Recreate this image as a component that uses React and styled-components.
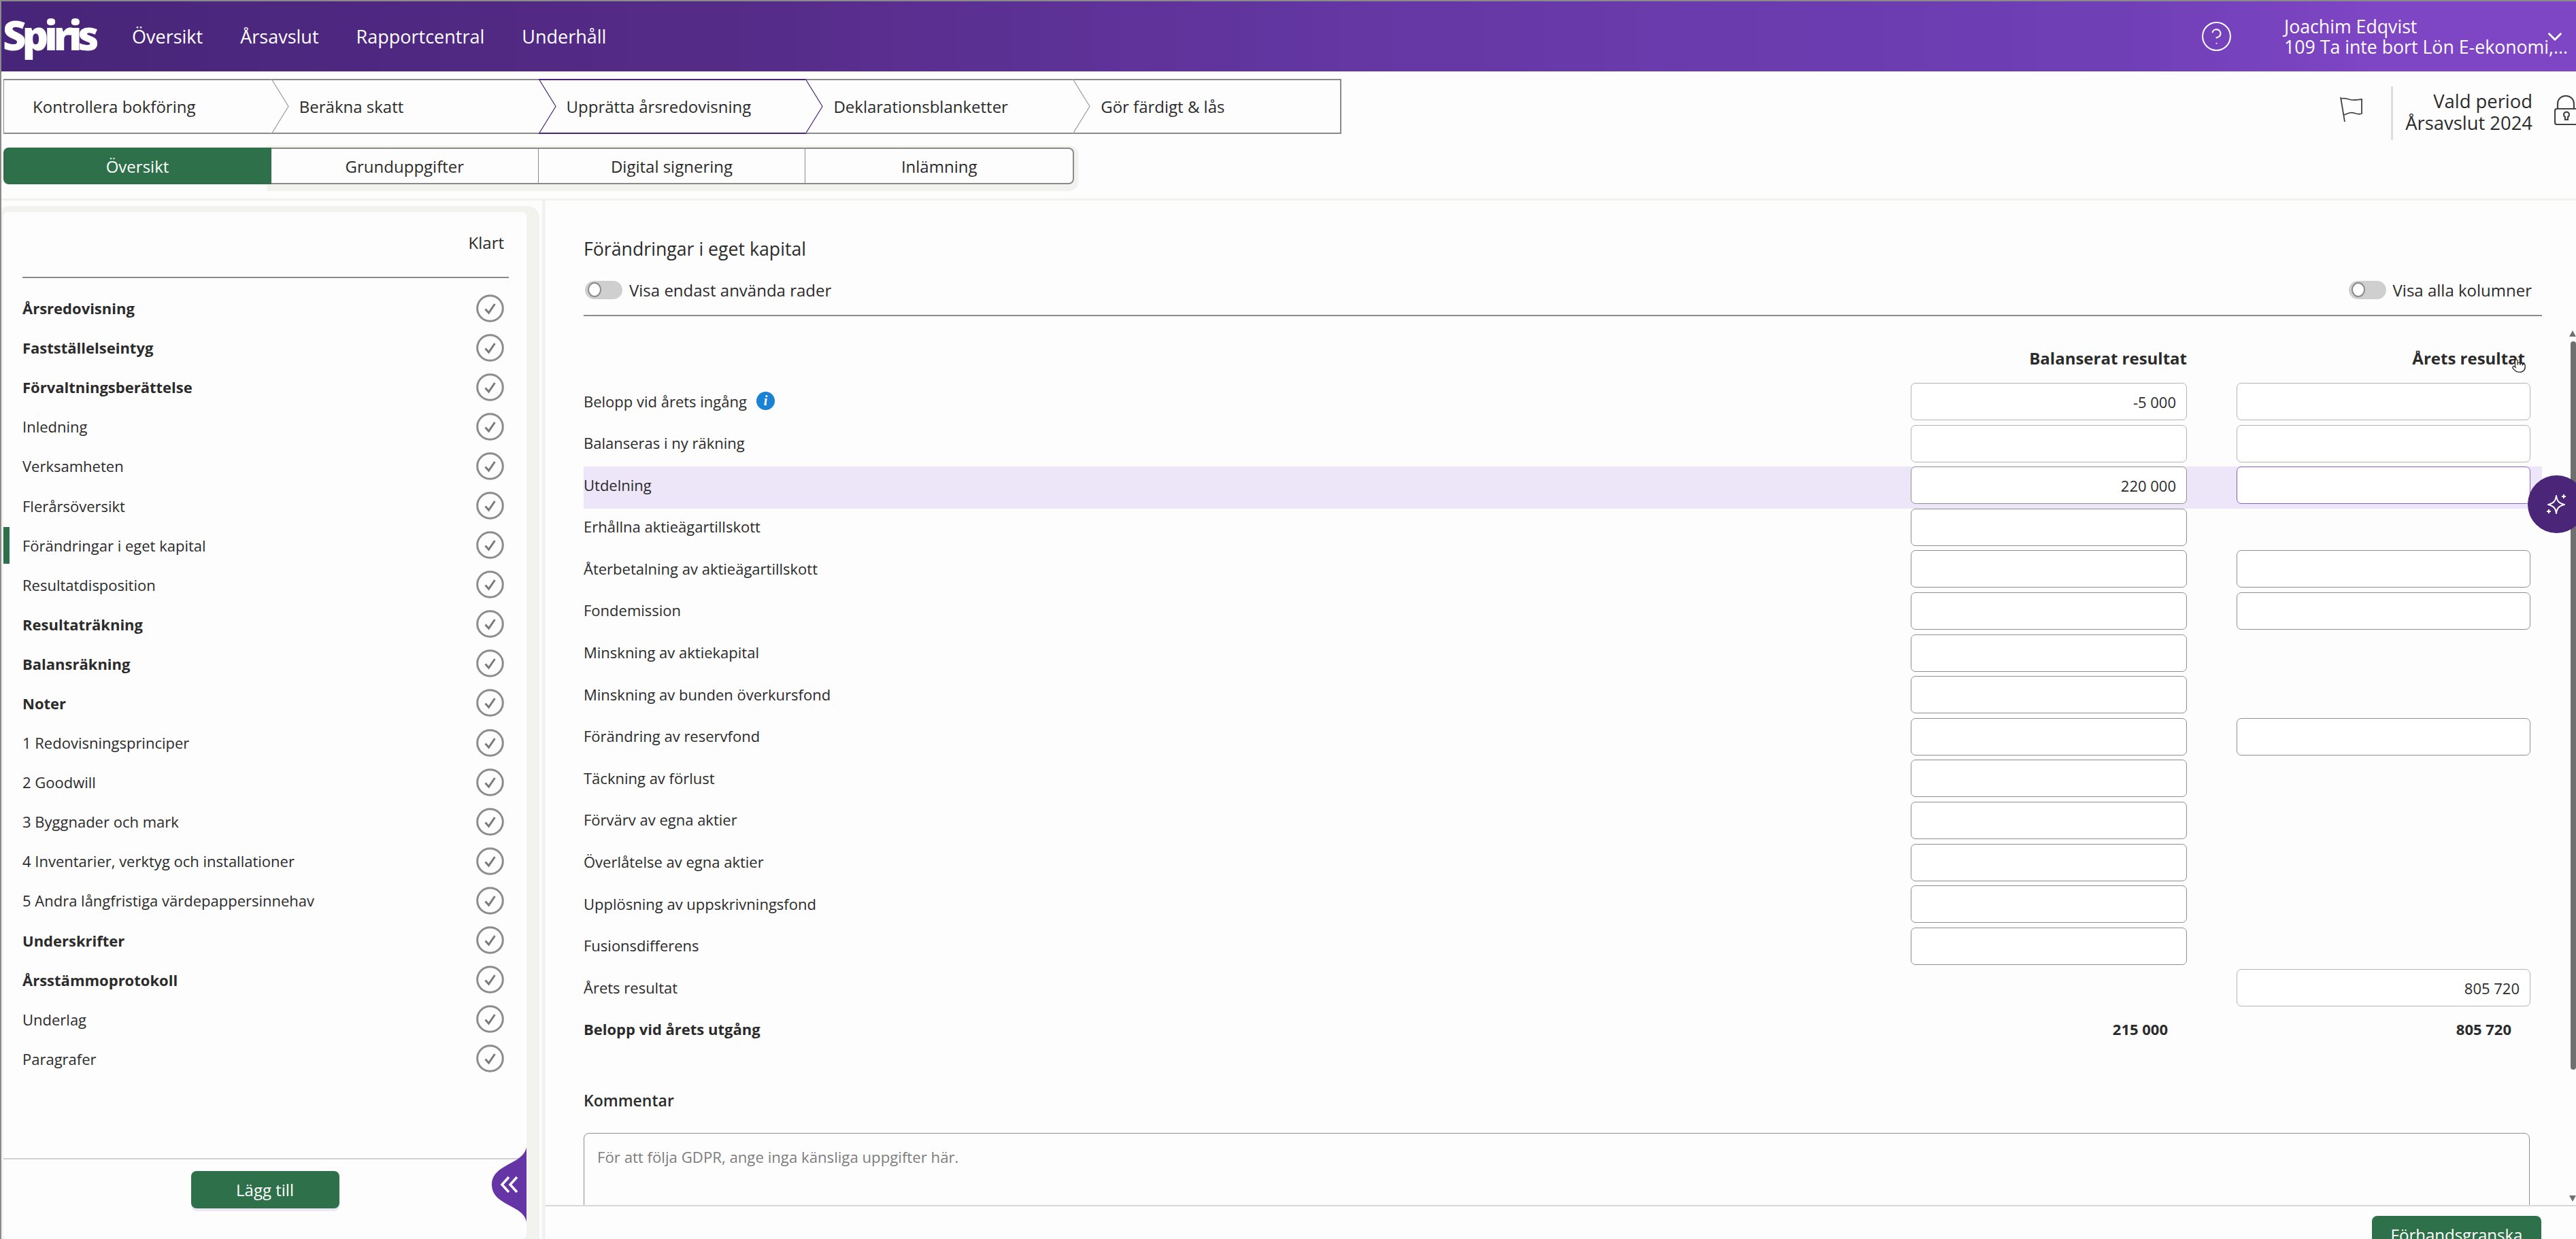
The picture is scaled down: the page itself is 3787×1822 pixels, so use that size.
import React from "react";
import styled, { createGlobalStyle } from "styled-components";
import { ChevronDown, CircleHelp, Pointer } from "lucide-react";

const steps = ["Kontrollera bokföring", "Beräkna skatt", "Upprätta årsredovisning", "Deklarationsblanketter", "Gör färdigt & lås"];
const tabs = ["Översikt", "Grunduppgifter", "Digital signering", "Inlämning"];
const navItems = ["Översikt", "Årsavslut", "Rapportcentral", "Underhåll"];

const sideRows = [
  { label: "Årsredovisning", bold: true },
  { label: "Fastställelseintyg", bold: true },
  { label: "Förvaltningsberättelse", bold: true },
  { label: "Inledning" },
  { label: "Verksamheten" },
  { label: "Flerårsöversikt" },
  { label: "Förändringar i eget kapital", active: true },
  { label: "Resultatdisposition" },
  { label: "Resultaträkning", bold: true },
  { label: "Balansräkning", bold: true },
  { label: "Noter", bold: true },
  { label: "1 Redovisningsprinciper" },
  { label: "2 Goodwill" },
  { label: "3 Byggnader och mark" },
  { label: "4 Inventarier, verktyg och installationer" },
  { label: "5 Andra långfristiga värdepappersinnehav" },
  { label: "Underskrifter", bold: true },
  { label: "Årsstämmoprotokoll", bold: true },
  { label: "Underlag" },
  { label: "Paragrafer" },
];

const equityRows = [
  { label: "Belopp vid årets ingång", info: true, a: "-5 000", b: "", tone: "soft" },
  { label: "Balanseras i ny räkning", a: "", b: "", tone: "soft" },
  { label: "Utdelning", a: "220 000", b: "", focus: true },
  { label: "Erhållna aktieägartillskott", a: "" },
  { label: "Återbetalning av aktieägartillskott", a: "", b: "" },
  { label: "Fondemission", a: "", b: "" },
  { label: "Minskning av aktiekapital", a: "" },
  { label: "Minskning av bunden överkursfond", a: "" },
  { label: "Förändring av reservfond", a: "", b: "" },
  { label: "Täckning av förlust", a: "" },
  { label: "Förvärv av egna aktier", a: "" },
  { label: "Överlåtelse av egna aktier", a: "" },
  { label: "Upplösning av uppskrivningsfond", a: "" },
  { label: "Fusionsdifferens", a: "" },
  { label: "Årets resultat", b: "805 720", tone: "soft" },
];

const GlobalStyle = createGlobalStyle`
  html, body { margin: 0; padding: 0; background: #fdfdfd; }
  * { box-sizing: border-box; }
`;

const Page = styled.div`
  width: 3787px;
  height: 1822px;
  overflow: hidden;
  display: flex;
  flex-direction: column;
  background: #fdfdfd;
  border-left: 2px solid #8a8a8a;
  font-family: "Open Sans", "Noto Sans", sans-serif;
  font-size: 22px;
  color: #2b2b2b;
`;

const TopBar = styled.header`
  height: 105px;
  flex: none;
  margin-left: -2px;
  display: flex;
  align-items: center;
  justify-content: space-between;
  padding: 0 14px 0 4px;
  border-top: 2px solid #8a8a8a;
  color: #fff;
  background: linear-gradient(90deg, #472578 0%, #552b88 28%, #6538a5 55%, #6f3fb6 82%, #7e45c4 92%, #7e45c4 100%);
`;

const TopLeft = styled.div`
  display: flex;
  align-items: center;
`;

const Logo = styled.div`
  width: 190px;
  font-family: "Open Sans", sans-serif;
  font-size: 60px;
  font-weight: 800;
  letter-spacing: -6px;
  line-height: 1;
  margin-top: -6px;
`;

const Nav = styled.nav`
  display: flex;
  gap: 55px;
  font-size: 27px;
`;

const TopRight = styled.div`
  display: flex;
  align-items: center;
`;

const HelpWrap = styled.div`
  display: flex;
  margin-right: 75px;
`;

const UserBlock = styled.div`
  width: 381px;
  font-size: 26.7px;
  line-height: 30px;
  white-space: nowrap;
`;

const SubHeader = styled.div`
  height: 190px;
  flex: none;
  display: flex;
  justify-content: space-between;
  padding: 11px 0 0 3px;
  border-bottom: 3px solid #f2f2ee;
`;

const Stepper = styled.div`
  width: 1967px;
  height: 81px;
  display: grid;
  grid-template-columns: repeat(5, 1fr);
  border-left: 1.5px solid #8a8a8a;
  border-right: 2px solid #8a8a8a;
`;

const Step = styled.div`
  position: relative;
  display: flex;
  align-items: center;
  padding-left: ${(p) => (p.$first ? "42px" : "41px")};
  border-top: 2px solid ${(p) => (p.$active ? "#4a2578" : "#8a8a8a")};
  border-bottom: 2px solid ${(p) => (p.$active ? "#4a2578" : "#8a8a8a")};
  font-size: 24px;
`;

const StepTip = styled.svg`
  position: absolute;
  right: -26px;
  top: -2px;
  z-index: 1;
`;

const TabRow = styled.div`
  display: flex;
  margin-top: 20px;
  height: 54px;
  width: 1574px;
`;

const ActiveTab = styled.div`
  position: relative;
  z-index: 1;
  width: 394px;
  display: flex;
  align-items: center;
  justify-content: center;
  color: #fff;
  background: #2e7049;
  border-radius: 8px 0 0 8px;
  font-size: 24px;
`;

const InactiveTabs = styled.div`
  flex: 1;
  display: grid;
  grid-template-columns: repeat(3, 1fr);
  background: #fdfdfd;
  border: 2px solid #8a8a8a;
  border-left: none;
  border-radius: 0 8px 8px 0;
  box-shadow: 0 3.5px 0 6.5px #f2f2ee;
`;

const Tab = styled.div`
  display: flex;
  align-items: center;
  justify-content: center;
  font-size: 24px;
  border-right: ${(p) => (p.$last ? "none" : "1.5px solid #8a8a8a")};
`;

const PeriodGroup = styled.div`
  display: flex;
  align-items: flex-start;
  margin-right: -10px;
`;

const FlagIcon = styled.svg`
  margin: 26px 41px 0 0;
`;

const PeriodText = styled.div`
  height: 79px;
  margin-top: 11px;
  padding: 6px 0 0 18px;
  border-left: 3px solid #dededa;
  text-align: right;
  font-size: 27.4px;
  line-height: 32px;
`;

const LockIcon = styled.svg`
  margin: 24px 0 0 32px;
`;

const Body = styled.div`
  flex: 1;
  min-height: 0;
  display: flex;
`;

const Sidebar = styled.aside`
  position: relative;
  z-index: 1;
  width: 769px;
  margin: 17px 0 0 3px;
  display: flex;
  flex-direction: column;
  background: #fdfdfd;
  box-shadow: 5px 5px 0 14px #f2f2ee;
  border-radius: 6px;
`;

const SideHead = styled.div`
  height: 97px;
  flex: none;
  margin: 0 26px 0 28px;
  padding: 27px 7px 0 0;
  text-align: right;
  font-size: 24px;
  line-height: 36px;
  border-bottom: 2px solid #8a8a8a;
`;

const SideList = styled.div`
  flex: 1;
  padding-top: 15px;
`;

const SideRow = styled.div`
  height: 58.1px;
  display: flex;
  align-items: center;
  justify-content: space-between;
  padding: 0 33px 0 28px;
  position: relative;
  font-weight: ${(p) => (p.$bold ? 700 : 400)};
`;

const ActiveMark = styled.span`
  position: absolute;
  left: 0;
  top: 2px;
  bottom: 2px;
  width: 9px;
  background: #2e7049;
`;

const SideFoot = styled.div`
  height: 119px;
  flex: none;
  display: flex;
  justify-content: center;
  padding-top: 17px;
  border-top: 2px solid #d2d2d2;
`;

const GreenButton = styled.button`
  height: 55px;
  width: ${(p) => p.$width}px;
  border: none;
  border-radius: 8px;
  background: #2e7049;
  color: #fff;
  font-family: inherit;
  font-size: 24px;
  box-shadow: 0 4px 0 #ece6f6;
`;

const CollapseHandle = styled.div`
  position: absolute;
  right: 0;
  top: 1375px;
  width: 51px;
  height: 110px;
`;

const Main = styled.main`
  position: relative;
  flex: 1;
  min-width: 0;
  margin-left: 28px;
  display: flex;
  flex-direction: column;
  background: #fdfdfd;
  box-shadow: -5px 0 0 #f2f2ee;
`;

const ScrollArea = styled.div`
  flex: 1;
  min-height: 0;
  overflow: hidden;
  display: flex;
`;

const Content = styled.div`
  flex: 1;
  min-width: 0;
  padding: 53px 40px 0 56px;
`;

const Title = styled.h2`
  margin: 0;
  font-size: 26.7px;
  font-weight: 400;
  line-height: 36px;
`;

const ToggleBar = styled.div`
  margin-top: 28px;
  padding: 0 15px 23px 2px;
  display: flex;
  justify-content: space-between;
  border-bottom: 2px solid #8a8a8a;
`;

const ToggleLabel = styled.label`
  display: flex;
  align-items: center;
  gap: 10px;
  height: 28px;
  font-size: 24px;
`;

const ToggleTrack = styled.span`
  width: 55px;
  height: 27px;
  display: flex;
  align-items: center;
  padding-left: 4px;
  border-radius: 14px;
  background: #cfcfcf;
`;

const ToggleKnob = styled.span`
  width: 20px;
  height: 22px;
  border-radius: 50%;
  background: #fff;
  border: 2px solid #8a8a8a;
`;

const TableRow = styled.div`
  display: grid;
  grid-template-columns: 1fr 406px 432px;
  column-gap: 73px;
  padding-right: 17px;
  height: 61.6px;
  background: ${(p) => (p.$focus ? "#ece6f8" : "transparent")};
`;

const HeadRow = styled(TableRow)`
  height: 36px;
  margin: 43px 0 19px;
  align-items: center;
`;

const ColHead = styled.div`
  font-size: 24px;
  font-weight: 700;
  text-align: right;
  padding-right: ${(p) => p.$pad}px;
`;

const RowLabel = styled.div`
  height: 55px;
  display: flex;
  align-items: center;
  gap: 14px;
  padding-bottom: 2px;
  font-weight: ${(p) => (p.$bold ? 700 : 400)};
`;

const InfoBadge = styled.span`
  width: 27px;
  height: 27px;
  display: flex;
  align-items: center;
  justify-content: center;
  border-radius: 50%;
  background: #1a82d4;
  color: #fff;
  font-family: "Liberation Serif", serif;
  font-size: 20px;
  font-style: italic;
  font-weight: 700;
`;

const Field = styled.div`
  height: 55px;
  display: flex;
  align-items: center;
  justify-content: flex-end;
  padding-right: 15px;
  background: #fff;
  border-radius: 7px;
  border: 1.5px solid ${(p) => (p.$focus ? "#8a5fd0" : p.$tone === "soft" ? "#b4b4b4" : "#8f8f8f")};
`;

const TotalCell = styled.div`
  height: 55px;
  display: flex;
  align-items: center;
  justify-content: flex-end;
  padding: 0 28px 2px 0;
  font-weight: 700;
`;

const CommentTitle = styled.h3`
  margin: 51px 0 0;
  font-size: 23px;
  font-weight: 600;
  line-height: 36px;
`;

const CommentBox = styled.div`
  width: 2861px;
  height: 240px;
  margin-top: 30px;
  padding: 20px 19px;
  border: 1.5px solid #8f8f8f;
  border-radius: 8px;
  color: #7d7d7d;
  font-size: 22.2px;
  line-height: 30px;
`;

const ScrollBar = styled.div`
  position: relative;
  width: 10px;
  flex: none;
  padding: 207px 0 0 2px;
`;

const ScrollThumb = styled.div`
  width: 8px;
  height: 1071px;
  border-radius: 4px;
  background: #6f6f6f;
`;

const ScrollArrow = styled.span`
  position: absolute;
  left: 0;
  ${(p) => (p.$down ? "top: 1463px;" : "top: 191px;")}
  width: 0;
  height: 0;
  border-left: 5px solid transparent;
  border-right: 5px solid transparent;
  ${(p) => (p.$down ? "border-top: 9px solid #6f6f6f;" : "border-bottom: 9px solid #6f6f6f;")}
`;

const MainFoot = styled.footer`
  height: 50px;
  flex: none;
  display: flex;
  justify-content: flex-end;
  padding: 14px 51px 0 0;
  border-top: 2px solid #d8d8d8;
`;

const Fab = styled.div`
  position: absolute;
  right: -14px;
  top: 404px;
  width: 85px;
  height: 85px;
  display: flex;
  align-items: center;
  justify-content: center;
  border-radius: 50%;
  background: #4a2578;
  color: #fff;
`;

const HandCursor = styled.div`
  position: absolute;
  left: 2890px;
  top: 232px;
  display: flex;
  color: #333;
`;

const CheckCircle = () => (
  <svg width="41" height="41" viewBox="0 0 41 41" fill="none">
    <circle cx="20.5" cy="20.5" r="18.8" stroke="#8c8c8c" strokeWidth="3" />
    <path d="M13.5 21.5l5 5.5 9-13" stroke="#7a7a7a" strokeWidth="3" />
  </svg>
);

const Sparkle = () => (
  <svg width="34" height="34" viewBox="0 0 34 34" fill="none" stroke="currentColor" strokeWidth="2">
    <path d="M16 4c1 8 4 11 12 13-8 2-11 5-12 13-1-8-4-11-12-13 8-2 11-5 12-13z" strokeLinejoin="round" />
    <path d="M27 2v6M24 5h6M5 24v6M2 27h6" />
  </svg>
);

const App = () => {
  return (
    <Page>
      <GlobalStyle />
      <TopBar>
        <TopLeft>
          <Logo>Spiris</Logo>
          <Nav>
            {navItems.map((item) => (
              <span key={item}>{item}</span>
            ))}
          </Nav>
        </TopLeft>
        <TopRight>
          <HelpWrap>
            <CircleHelp size={49} strokeWidth={1} />
          </HelpWrap>
          <UserBlock>
            <div>Joachim Edqvist</div>
            <div>109 Ta inte bort Lön E-ekonomi,...</div>
          </UserBlock>
          <ChevronDown size={34} strokeWidth={2} />
        </TopRight>
      </TopBar>

      <SubHeader>
        <div>
          <Stepper>
            {steps.map((step, i) => (
              <Step key={step} $first={i === 0} $active={i === 2}>
                {step}
                {i < 4 && (
                  <StepTip width="27" height="81" viewBox="0 0 27 81" fill="none">
                    <path d="M1 0l25 40.5L1 81" fill="#fdfdfd" />
                    <path
                      d="M1 0l25 40.5L1 81"
                      stroke={i === 1 || i === 2 ? "#4a2578" : "#9a9a9a"}
                      strokeWidth="1.2"
                    />
                  </StepTip>
                )}
              </Step>
            ))}
          </Stepper>
          <TabRow>
            <ActiveTab>{tabs[0]}</ActiveTab>
            <InactiveTabs>
              {tabs.slice(1).map((tab, i) => (
                <Tab key={tab} $last={i === 2}>
                  {tab}
                </Tab>
              ))}
            </InactiveTabs>
          </TabRow>
        </div>
        <PeriodGroup>
          <FlagIcon width="34" height="38" viewBox="0 0 34 38" fill="none" stroke="#444" strokeWidth="1.8">
            <path d="M1 1l6 36" />
            <path d="M2 3c8-2 11 3 20 2 4 0 8-1 10-1v21c-7 3-11-3-18-1-3 1-6 2-8 3" />
          </FlagIcon>
          <PeriodText>
            <div>Vald period</div>
            <div>Årsavslut 2024</div>
          </PeriodText>
          <LockIcon width="42" height="44" viewBox="0 0 42 44" fill="none" stroke="#444" strokeWidth="2.2">
            <path d="M5 20V13C5 5 11 1 17 1s12 4 12 12v7" />
            <rect x="1" y="20" width="38" height="23" rx="3" />
            <path d="M16 36v-4a4 4 0 1 1 4 0v4z" />
          </LockIcon>
        </PeriodGroup>
      </SubHeader>

      <Body>
        <Sidebar>
          <SideHead>Klart</SideHead>
          <SideList>
            {sideRows.map((row) => (
              <SideRow key={row.label} $bold={row.bold}>
                {row.active && <ActiveMark />}
                {row.label}
                <CheckCircle />
              </SideRow>
            ))}
          </SideList>
          <SideFoot>
            <GreenButton $width={218}>Lägg till</GreenButton>
          </SideFoot>
          <CollapseHandle>
            <svg width="51" height="110" viewBox="0 0 51 110">
              <path d="M51 0C46 26 0 24 0 55s46 29 51 55z" fill="#6535a5" />
              <path d="M25 44L15 55l10 11M37 44L27 55l10 11" fill="none" stroke="#fff" strokeWidth="3.5" />
            </svg>
          </CollapseHandle>
        </Sidebar>

        <Main>
          <ScrollArea>
            <Content>
              <Title>Förändringar i eget kapital</Title>
              <ToggleBar>
                <ToggleLabel>
                  <ToggleTrack>
                    <ToggleKnob />
                  </ToggleTrack>
                  Visa endast använda rader
                </ToggleLabel>
                <ToggleLabel>
                  <ToggleTrack>
                    <ToggleKnob />
                  </ToggleTrack>
                  Visa alla kolumner
                </ToggleLabel>
              </ToggleBar>

              <HeadRow>
                <div />
                <ColHead $pad={0}>Balanserat resultat</ColHead>
                <ColHead $pad={8}>Årets resultat</ColHead>
              </HeadRow>

              {equityRows.map((row) => (
                <TableRow key={row.label} $focus={row.focus}>
                  <RowLabel>
                    {row.label}
                    {row.info && <InfoBadge>i</InfoBadge>}
                  </RowLabel>
                  {row.a !== undefined ? <Field $tone={row.tone}>{row.a}</Field> : <div />}
                  {row.b !== undefined ? (
                    <Field $tone={row.tone} $focus={row.focus}>
                      {row.b}
                    </Field>
                  ) : (
                    <div />
                  )}
                </TableRow>
              ))}

              <TableRow>
                <RowLabel $bold>Belopp vid årets utgång</RowLabel>
                <TotalCell>215 000</TotalCell>
                <TotalCell>805 720</TotalCell>
              </TableRow>

              <CommentTitle>Kommentar</CommentTitle>
              <CommentBox>För att följa GDPR, ange inga känsliga uppgifter här.</CommentBox>
            </Content>
            <ScrollBar>
              <ScrollArrow />
              <ScrollThumb />
              <ScrollArrow $down />
            </ScrollBar>
          </ScrollArea>
          <MainFoot>
            <GreenButton $width={249}>Förhandsgranska</GreenButton>
          </MainFoot>
          <HandCursor>
            <Pointer size={22} strokeWidth={1.5} fill="#fff" />
          </HandCursor>
          <Fab>
            <Sparkle />
          </Fab>
        </Main>
      </Body>
    </Page>
  );
};

export default App;
